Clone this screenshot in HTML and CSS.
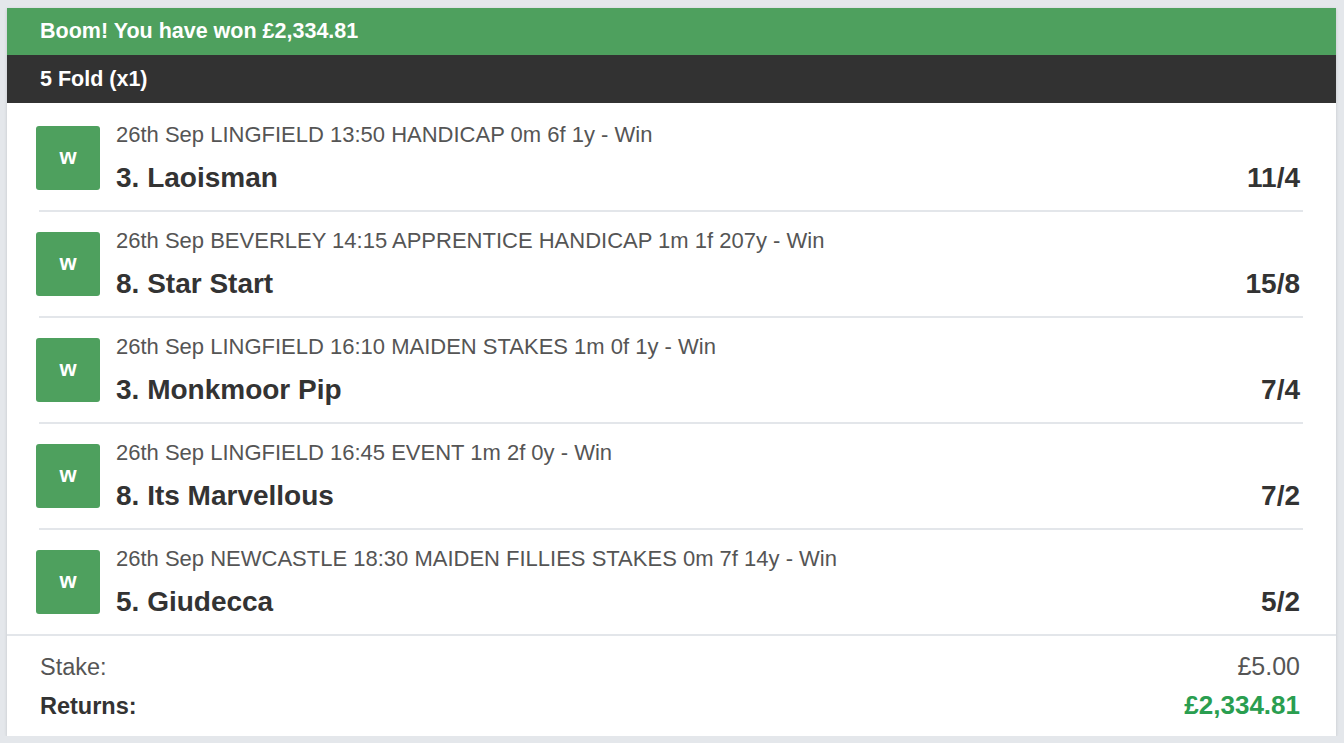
FILE: index.html
```html
<!DOCTYPE html>
<html>
<head>
<meta charset="utf-8">
<link rel="stylesheet" href="styles.css">
</head>
<body>
<div class="card">
  <div class="banner">Boom! You have won £2,334.81</div>
  <div class="bet-type">5 Fold (x1)</div>
  <div class="legs">
    <div class="leg">
      <div class="badge">w</div>
      <div class="leg-info">
        <div class="meta">26th Sep LINGFIELD 13:50 HANDICAP 0m 6f 1y - Win</div>
        <div class="name-row"><span class="name">3. Laoisman</span><span class="odds">11/4</span></div>
      </div>
    </div>
    <div class="leg">
      <div class="badge">w</div>
      <div class="leg-info">
        <div class="meta">26th Sep BEVERLEY 14:15 APPRENTICE HANDICAP 1m 1f 207y - Win</div>
        <div class="name-row"><span class="name">8. Star Start</span><span class="odds">15/8</span></div>
      </div>
    </div>
    <div class="leg">
      <div class="badge">w</div>
      <div class="leg-info">
        <div class="meta">26th Sep LINGFIELD 16:10 MAIDEN STAKES 1m 0f 1y - Win</div>
        <div class="name-row"><span class="name">3. Monkmoor Pip</span><span class="odds">7/4</span></div>
      </div>
    </div>
    <div class="leg">
      <div class="badge">w</div>
      <div class="leg-info">
        <div class="meta">26th Sep LINGFIELD 16:45 EVENT 1m 2f 0y - Win</div>
        <div class="name-row"><span class="name">8. Its Marvellous</span><span class="odds">7/2</span></div>
      </div>
    </div>
    <div class="leg">
      <div class="badge">w</div>
      <div class="leg-info">
        <div class="meta">26th Sep NEWCASTLE 18:30 MAIDEN FILLIES STAKES 0m 7f 14y - Win</div>
        <div class="name-row"><span class="name">5. Giudecca</span><span class="odds">5/2</span></div>
      </div>
    </div>
  </div>
  <div class="summary">
    <div class="sum-row stake"><span>Stake:</span><span class="stake-val">£5.00</span></div>
    <div class="sum-row returns"><span>Returns:</span><span class="returns-val">£2,334.81</span></div>
  </div>
</div>
</body>
</html>
```
FILE: styles.css
```css
html, body {
  margin: 0;
  padding: 0;
  background: #e4e7eb;
  font-family: "Liberation Sans", Arial, Helvetica, sans-serif;
}
body {
  padding: 8px 8px 0 7px;
}
.card {
  background: #ffffff;
  box-shadow: 0 1px 3px rgba(0, 0, 0, 0.15);
}
.banner {
  background: #4ea05e;
  color: #ffffff;
  font-weight: bold;
  font-size: 21.5px;
  height: 47px;
  line-height: 47px;
  padding-left: 33px;
}
.bet-type {
  background: #323232;
  color: #ffffff;
  font-weight: bold;
  font-size: 21.5px;
  height: 48px;
  line-height: 48px;
  padding-left: 33px;
}
.legs {
  padding: 3px 33px 0 32px;
}
.leg {
  display: flex;
  align-items: flex-start;
  gap: 16px;
  padding: 20px 3px 20px 0;
  border-bottom: 2px solid #e3e6ea;
}
.leg:last-child {
  border-bottom: none;
}
.badge {
  flex: 0 0 64px;
  width: 64px;
  height: 64px;
  margin-left: -3px;
  border-radius: 3px;
  background: #4ea05e;
  color: #ffffff;
  font-weight: bold;
  font-size: 22px;
  display: flex;
  align-items: center;
  justify-content: center;
  padding-bottom: 3px;
  box-sizing: border-box;
}
.leg-info {
  flex: 1;
  display: flex;
  flex-direction: column;
}
.meta {
  font-size: 22px;
  color: #555555;
  line-height: 22px;
  margin-top: -2px;
}
.name-row {
  display: flex;
  justify-content: space-between;
  align-items: baseline;
  margin-top: 20px;
}
.name, .odds {
  font-size: 28px;
  font-weight: bold;
  color: #333333;
  line-height: 24px;
}
.summary {
  border-top: 2px solid #e3e6ea;
  padding: 14px 36px 14px 33px;
}
.sum-row {
  display: flex;
  justify-content: space-between;
  align-items: baseline;
}
.stake {
  font-size: 23.5px;
  color: #555555;
  line-height: 32px;
}
.stake-val {
  font-size: 25px;
}
.returns {
  font-size: 23.5px;
  font-weight: bold;
  color: #333333;
  line-height: 32px;
  margin-top: 6px;
}
.returns-val {
  font-size: 26px;
  color: #2a9e50;
}
```
